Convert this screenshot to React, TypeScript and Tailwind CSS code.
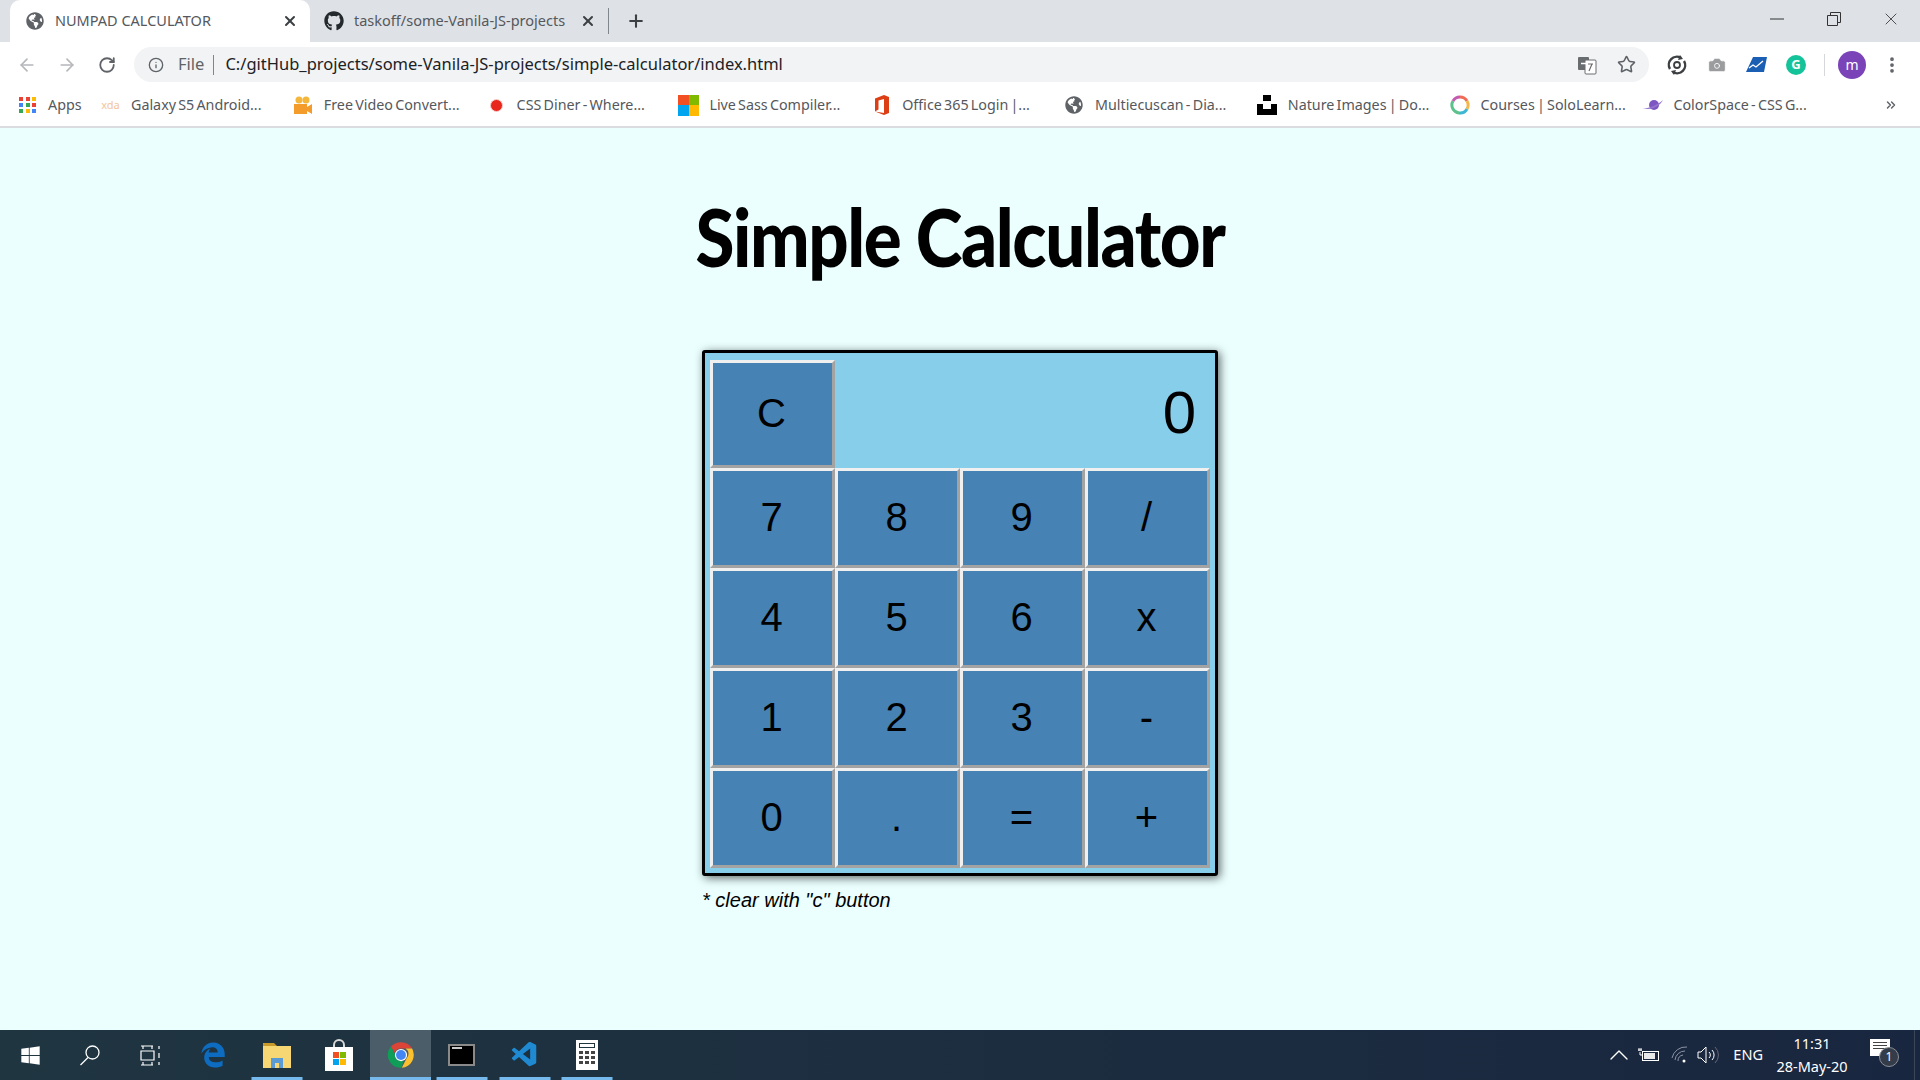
import { ArrowLeft, ArrowRight, Camera, ChevronUp, ChevronsRight, Info, MoreVertical, Plus, RotateCw, Star, X } from "lucide-react";
import type { ReactNode } from "react";
import { FaEdgeLegacy, FaGithub, FaGlobeAmericas, FaWindows } from "react-icons/fa";
import { VscVscode } from "react-icons/vsc";

const rows = ["7", "8", "9", "/", "4", "5", "6", "x", "1", "2", "3", "-", "0", ".", "=", "+"];

const btn =
  "flex items-center justify-center pr-[2px] pb-[2px] bg-[#4682b4] border-[3px] border-t-[#f0f0f0] border-l-[#f0f0f0] border-r-[#a3a3a3] border-b-[#a3a3a3] text-[40px] text-black font-['Liberation_Sans',sans-serif]";

function ChromeLogo({ size = 26 }: { size?: number }) {
  return (
    <svg width={size} height={size} viewBox="0 0 48 48">
      <path d="M24 2a22 22 0 0 1 19 11H24a11 11 0 0 0-10.500 7.500L6.600 9.800A22 22 0 0 1 24 2z" fill="#db4437" />
      <path d="M43 13a22 22 0 0 1-17.600 32.900L33.500 30a11 11 0 0 0-1.600-17z" fill="#fbc02d" />
      <path d="M6.600 9.800l7.700 13.400A11 11 0 0 0 28 34l-3 11.900A22 22 0 0 1 6.600 9.800z" fill="#0f9d58" />
      <circle cx="24" cy="24" r="10.500" fill="#fff" />
      <circle cx="24" cy="24" r="8.500" fill="#4285f4" />
    </svg>
  );
}

function Tab({ active, icon, title, w }: { active?: boolean; icon: ReactNode; title: string; w: string }) {
  return (
    <div className={`flex items-center h-[42px] ${w} ${active ? "bg-white rounded-t-[10px] pl-[16px]" : "pl-[14px]"}`}>
      <span className={`shrink-0 flex ${active ? "w-[29px]" : "w-[30px]"}`}>{icon}</span>
      <span className="flex-1 whitespace-nowrap text-[14.5px] text-[#55585c]">{title}</span>
      <X size={16} strokeWidth={3} className="text-[#3c4043] mr-[12px]" />
    </div>
  );
}

function Bookmark({ icon, label }: { icon: ReactNode; label: string }) {
  return (
    <div className="flex items-center w-[192.8px] shrink-0">
      <span className="w-[21px] flex justify-center shrink-0">{icon}</span>
      <span className="ml-[10px] whitespace-nowrap text-[14.3px] [word-spacing:-1.5px] text-[#55585c]">{label}</span>
    </div>
  );
}

function TaskItem({ children, w, open, hover }: { children: ReactNode; w: string; open?: boolean; hover?: boolean }) {
  return (
    <div className={`relative ${w} h-full flex items-center justify-center ${hover ? "bg-[#4a5d68]" : ""}`}>
      {children}
      {open && <div className="absolute bottom-0 left-1/2 -translate-x-1/2 w-[51px] h-[3px] bg-[#76b9ed]" />}
      {hover && <div className="absolute bottom-0 left-0 right-0 h-[3px] bg-[#76b9ed]" />}
    </div>
  );
}

export default function App() {
  return (
    <div className="h-screen w-[1920px] flex flex-col overflow-hidden bg-[#ebffff] font-['Noto_Sans',sans-serif]">
      {/* tab strip */}
      <div className="h-[42px] bg-[#dee1e6] flex items-center pl-[10px] shrink-0">
        <Tab active w="w-[300px]" title="NUMPAD CALCULATOR" icon={<FaGlobeAmericas size={18} className="text-[#5f6368]" />} />
        <Tab w="w-[298px]" title="taskoff/some-Vanila-JS-projects" icon={<FaGithub size={20} className="text-[#24292e]" />} />
        <div className="w-px h-[26px] bg-[#80868b]" />
        <Plus size={20} strokeWidth={2.5} className="text-[#3c4043] ml-[17px]" />
        <div className="ml-auto self-start flex items-center h-[37px] text-[#333]">
          <svg width="14" height="14" viewBox="0 0 14 14" className="mr-[43px]"><path d="M0 7h14" stroke="currentColor" /></svg>
          <svg width="14" height="14" viewBox="0 0 14 14" className="mr-[40px]"><path d="M.5 3.500h10v10H.5zM3.500 3.500v-3h10v10h-3" fill="none" stroke="currentColor" /></svg>
          <X size={20} strokeWidth={1} className="mr-[19px]" />
        </div>
      </div>

      {/* toolbar */}
      <div className="h-[42px] pt-[3px] bg-white flex items-center shrink-0">
        <ArrowLeft size={20} strokeWidth={2} className="text-[#b5b7ba] ml-[17px]" />
        <ArrowRight size={20} strokeWidth={2} className="text-[#b5b7ba] ml-[20px]" />
        <RotateCw size={18} strokeWidth={2.4} className="text-[#5f6368] ml-[21px]" />
        <div className="ml-[18px] w-[1515px] h-[35px] rounded-full bg-[#f1f3f4] flex items-center">
          <Info size={16} strokeWidth={2} className="text-[#5f6368] ml-[14px]" />
          <span className="ml-[14px] text-[16.5px] text-[#5f6368]">File</span>
          <span className="ml-[9px] w-px h-[20px] bg-[#80868b]" />
          <span className="ml-[11px] text-[16.5px] text-[#202124] whitespace-nowrap">C:/gitHub_projects/some-Vanila-JS-projects/simple-calculator/index.html</span>
          <div className="ml-auto flex items-center mr-[13px]">
            <svg width="20" height="20" viewBox="0 0 20 20" className="mr-[20px]">
              <rect x="1" y="2" width="11" height="13" rx="1" fill="#6a6d70" />
              <rect x="8" y="5" width="11" height="14" rx="1" fill="#fff" stroke="#6a6d70" />
              <path d="M4 8.500h5" stroke="#fff" strokeWidth="1.500" />
              <path d="M11 9h5M15 9l-3 7" stroke="#6a6d70" strokeWidth="1.200" fill="none" />
            </svg>
            <Star size={19} strokeWidth={2} className="text-[#5f6368]" />
          </div>
        </div>
        <div className="flex items-center ml-[17px]">
          <svg width="22" height="22" viewBox="0 0 22 22">
            <path d="M4 15a8 8 0 0 1 11-11M18 7a8 8 0 0 1-11 11" fill="none" stroke="#3c4043" strokeWidth="2.400" />
            <path d="M14 1l3 4-5 1zM8 21l-3-4 5-1z" fill="#3c4043" />
            <circle cx="11" cy="11" r="3" fill="none" stroke="#3c4043" strokeWidth="1.800" />
          </svg>
          <Camera size={20} fill="#9a9c9e" strokeWidth={1} className="text-white ml-[19px]" />
          <svg width="22" height="16" viewBox="0 0 22 16" className="ml-[18px]">
            <path d="M8 0h14l-3 15H1z" fill="#1a5fb4" />
            <path d="M4 11l4-3 3 2 7-6" fill="none" stroke="#fff" strokeWidth="1.300" />
          </svg>
          <div className="ml-[19px] w-[20px] h-[20px] rounded-full bg-[#15c39a] flex items-center justify-center text-white text-[13px] font-bold">G</div>
          <div className="ml-[18px] w-px h-[22px] bg-[#d5d7da]" />
          <div className="ml-[13px] w-[28px] h-[28px] rounded-full bg-[#7a44b8] flex items-center justify-center text-white text-[14px] leading-none">m</div>
          <MoreVertical size={20} strokeWidth={2.5} className="text-[#5f6368] ml-[16px]" />
        </div>
      </div>

      {/* bookmarks */}
      <div className="h-[44px] bg-white border-b-2 border-[#dadce0] flex items-center pl-[19px] shrink-0">
        <div className="flex items-center w-[81px] shrink-0">
          <div className="grid grid-cols-3 gap-[2px] w-[18px]">
            {["#ea4335", "#ea4335", "#fbbc05", "#4285f4", "#34a853", "#ea4335", "#34a853", "#fbbc05", "#4285f4"].map((c, i) => (
              <span key={i} className="h-[4px] w-[4px]" style={{ backgroundColor: c }} />
            ))}
          </div>
          <span className="ml-[11px] text-[14.3px] text-[#55585c]">Apps</span>
        </div>
        <Bookmark label="Galaxy S5 Android..." icon={<span className="text-[11px] text-[#f2c49a]">xda</span>} />
        <Bookmark
          label="Free Video Convert..."
          icon={
            <svg width="20" height="20" viewBox="0 0 20 20">
              <circle cx="6" cy="5" r="3.500" fill="#f5b73b" />
              <circle cx="13" cy="5" r="3.500" fill="#f5b73b" />
              <path d="M1 9h13v10H1zM14 12l5-3v10l-5-3z" fill="#f39c2c" />
            </svg>
          }
        />
        <Bookmark label="CSS Diner - Where..." icon={<span className="block w-[13px] h-[13px] rounded-full bg-[#e8261c] border border-[#f3d0cc]" />} />
        <Bookmark
          label="Live Sass Compiler..."
          icon={
            <span className="grid grid-cols-2 w-[21px] h-[21px]">
              <span className="bg-[#f25022]" />
              <span className="bg-[#7fba00]" />
              <span className="bg-[#00a4ef]" />
              <span className="bg-[#ffb900]" />
            </span>
          }
        />
        <Bookmark
          label="Office 365 Login |..."
          icon={
            <svg width="16" height="20" viewBox="0 0 16 20">
              <path d="M1 3.500L10 0l5 2v16l-5 2-9-3.500 9 1.500V4L4.500 5.500v9L1 16.500z" fill="#dc3e15" />
            </svg>
          }
        />
        <Bookmark label="Multiecuscan - Dia..." icon={<FaGlobeAmericas size={18} className="text-[#5f6368]" />} />
        <Bookmark
          label="Nature Images | Do..."
          icon={
            <svg width="20" height="20" viewBox="0 0 20 20">
              <path d="M6 0h8v6H6zM0 9h6v5h8V9h6v11H0z" fill="#000" />
            </svg>
          }
        />
        <Bookmark
          label="Courses | SoloLearn..."
          icon={
            <svg width="20" height="20" viewBox="0 0 20 20" fill="none" strokeWidth="3">
              <path d="M10 2a8 8 0 0 1 7 4" stroke="#ef6c57" />
              <path d="M17 6a8 8 0 0 1 0 8" stroke="#f2b84b" />
              <path d="M17 14a8 8 0 0 1-8 4" stroke="#3fb6d3" />
              <path d="M9 18a8 8 0 0 1-6-12" stroke="#5cc28b" />
              <path d="M3 6a8 8 0 0 1 7-4" stroke="#c45bb0" />
            </svg>
          }
        />
        <Bookmark
          label="ColorSpace - CSS G..."
          icon={
            <svg width="20" height="14" viewBox="0 0 20 14">
              <circle cx="11" cy="7" r="5" fill="#7e57c2" />
              <path d="M0 10c6 1 14-3 20-8-3 6-12 11-20 8z" fill="#9575cd" />
            </svg>
          }
        />
        <ChevronsRight size={14} strokeWidth={2.5} className="text-[#5f6368] ml-[49px] shrink-0" />
      </div>

      {/* page */}
      <main className="flex-1 min-h-0 flex flex-col items-center">
        <h1 className="mt-[58px] text-[80px] leading-[100px] font-black tracking-[-0.02em] scale-x-[0.885] text-black font-['Lato',sans-serif] whitespace-nowrap">
          Simple Calculator
        </h1>
        <div className="mt-[64px] w-[516px] border-[3px] border-black rounded-[3px] bg-[#87ceeb] px-[5px] pt-[7px] pb-[5px] shadow-[2px_2px_10px_rgba(0,0,0,0.6)]">
          <div className="grid grid-cols-[repeat(4,125px)] grid-rows-[108px_repeat(4,100px)]">
            <div className={btn}>C</div>
            <div className="col-span-3 flex items-center justify-end pr-[14px] pb-[2px] text-[60px] text-black font-['Liberation_Sans',sans-serif]">0</div>
            {rows.map(k => (
              <div key={k} className={btn}>{k}</div>
            ))}
          </div>
        </div>
        <p className="w-[516px] mt-[9px] text-[20px] italic text-black font-['Liberation_Sans',sans-serif]">* clear with "c" button</p>
      </main>

      {/* taskbar */}
      <footer className="h-[50px] shrink-0 bg-gradient-to-r from-[#1f3540] to-[#19263f] flex items-center text-white">
        <TaskItem w="w-[60px]"><FaWindows size={21} /></TaskItem>
        <TaskItem w="w-[60px]">
          <svg width="22" height="22" viewBox="0 0 22 22" fill="none" stroke="#fff" strokeWidth="1.300">
            <circle cx="13.500" cy="8.500" r="6.500" />
            <path d="M9 13.500L1.500 21" />
          </svg>
        </TaskItem>
        <TaskItem w="w-[60px]">
          <svg width="21" height="21" viewBox="0 0 21 21" fill="none" stroke="#fff" strokeWidth="1.200">
            <path d="M1 1h12M1 20h12M1 6h13v9H1zM3 1v3M12 1v3M3 17v3M12 17v3M19 1v3M19 8v5M19 17v3" />
          </svg>
        </TaskItem>
        <TaskItem w="w-[66px]"><FaEdgeLegacy size={26} className="text-[#0d6cc0]" /></TaskItem>
        <TaskItem w="w-[61px]" open>
          <svg width="28" height="26" viewBox="0 0 28 26">
            <path d="M0 1h11l3 3h-14z" fill="#c79a2a" />
            <path d="M0 4h28v22H0z" fill="#f7d774" />
            <path d="M8 26V16h12v10h-4v-5h-4v5z" fill="#5b9bd5" />
          </svg>
        </TaskItem>
        <TaskItem w="w-[63px]">
          <svg width="30" height="32" viewBox="0 0 30 32">
            <path d="M10 10V6a5 5 0 0 1 10 0v4" fill="none" stroke="#d9d9d9" strokeWidth="2" />
            <rect x="1" y="8" width="28" height="24" fill="#fff" />
            <rect x="9" y="13" width="6" height="6" fill="#f25022" />
            <rect x="16" y="13" width="6" height="6" fill="#7fba00" />
            <rect x="9" y="20" width="6" height="6" fill="#00a4ef" />
            <rect x="16" y="20" width="6" height="6" fill="#ffb900" />
          </svg>
        </TaskItem>
        <TaskItem w="w-[61px]" hover><ChromeLogo size={28} /></TaskItem>
        <TaskItem w="w-[61px]" open>
          <div className="w-[27px] h-[22px] bg-black border-2 border-[#8a8a8a] pl-[2px] pt-[1px]">
            <div className="w-[10px] h-[2px] bg-[#c9c9c9]" />
          </div>
        </TaskItem>
        <TaskItem w="w-[65px]" open><VscVscode size={30} className="text-[#1f8ad2]" /></TaskItem>
        <TaskItem w="w-[59px]" open>
          <div className="w-[22px] h-[30px] bg-white px-[3px] pt-[3px]">
            <div className="h-[5px] border border-[#1f3540]" />
            <div className="grid grid-cols-3 gap-[2px] mt-[3px]">
              {Array.from({ length: 9 }).map((_, i) => (
                <span key={i} className="h-[3px] bg-[#444]" />
              ))}
            </div>
          </div>
        </TaskItem>

        <div className="ml-auto flex items-center h-full font-['Noto_Sans',sans-serif]">
          <ChevronUp size={32} strokeWidth={1} />
          <svg width="22" height="14" viewBox="0 0 22 14" fill="none" stroke="#fff" className="ml-[3px]">
            <rect x="4.500" y="3.500" width="16" height="9" />
            <rect x="6" y="5" width="11" height="6" fill="#e8e8e8" stroke="none" />
            <path d="M0 2h4M1 0v3M3 0v3M2 4v3h3" />
          </svg>
          <svg width="18" height="18" viewBox="0 0 18 18" fill="none" stroke="#8a95a5" strokeWidth="1" className="ml-[11px]">
            <path d="M1 12a14 14 0 0 1 15-11M4 14a10 10 0 0 1 10-9M7 15a6 6 0 0 1 5-6" />
            <circle cx="13" cy="15" r="1.500" fill="#fff" stroke="none" />
          </svg>
          <svg width="22" height="18" viewBox="0 0 22 18" fill="none" stroke="#fff" className="ml-[8px]">
            <path d="M1 6h3l5-5v16l-5-5H1zM12 6a4 4 0 0 1 0 6M15 4a7 7 0 0 1 0 10" />
            <path d="M18 1a11 11 0 0 1 0 16" stroke="#667" />
          </svg>
          <span className="ml-[14px] text-[14.5px]">ENG</span>
          <div className="ml-[7px] w-[84px] flex flex-col items-center text-[14.5px] leading-[23px]">
            <span>11:31</span>
            <span>28-May-20</span>
          </div>
          <div className="relative ml-[16px] mr-[10px] w-[34px] h-[34px]">
            <div className="absolute left-0 top-[1px] w-[20px] h-[17px] bg-white px-[3px] pt-[3px]">
              <div className="h-[1px] bg-[#444] mb-[2px]" />
              <div className="h-[1px] bg-[#444] mb-[2px]" />
              <div className="h-[1px] bg-[#444]" />
            </div>
            <div className="absolute left-[9px] top-[9px] w-[20px] h-[20px] rounded-full bg-[#333c48] border border-[#8b9099] flex items-center justify-center text-[12px] leading-none">1</div>
          </div>
          <div className="w-px h-full bg-[#3a4658] mr-[5px]" />
        </div>
      </footer>
    </div>
  );
}
